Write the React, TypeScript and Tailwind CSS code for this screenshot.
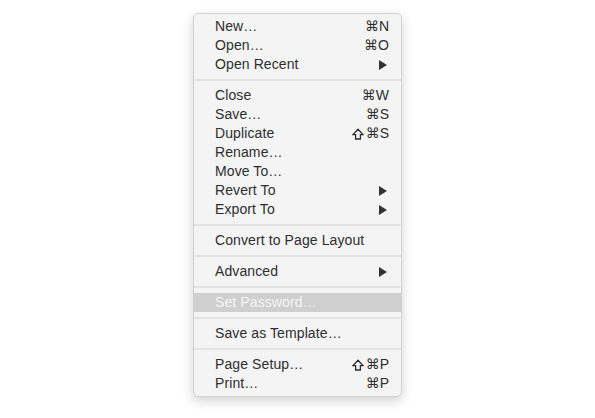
import React from "react";

type Item = { label: string; shortcut?: string; arrow?: boolean; highlighted?: boolean };

const groups: Item[][] = [
  [
    { label: "New…", shortcut: "⌘N" },
    { label: "Open…", shortcut: "⌘O" },
    { label: "Open Recent", arrow: true },
  ],
  [
    { label: "Close", shortcut: "⌘W" },
    { label: "Save…", shortcut: "⌘S" },
    { label: "Duplicate", shortcut: "⇧⌘S" },
    { label: "Rename…" },
    { label: "Move To…" },
    { label: "Revert To", arrow: true },
    { label: "Export To", arrow: true },
  ],
  [{ label: "Convert to Page Layout" }],
  [{ label: "Advanced", arrow: true }],
  [{ label: "Set Password…", highlighted: true }],
  [{ label: "Save as Template…" }],
  [
    { label: "Page Setup…", shortcut: "⇧⌘P" },
    { label: "Print…", shortcut: "⌘P" },
  ],
];

function Arrow() {
  return (
    <svg width="8" height="10" viewBox="0 0 8 10" className="mr-[2px]">
      <path d="M0 0 L8 5 L0 10 Z" fill="#333333" />
    </svg>
  );
}

function ShiftIcon() {
  return (
    <svg width="12" height="12" viewBox="0 0 12 12" className="mr-[2px]">
      <path
        d="M6 1.2 L11 6.6 H8.4 V11 H3.6 V6.6 H1 Z"
        fill="none"
        stroke="#2e2e2e"
        strokeWidth="1.3"
        strokeLinejoin="miter"
      />
    </svg>
  );
}

function Shortcut({ text }: { text: string }) {
  const chars = Array.from(text);
  return (
    <span className="flex items-center">
      {chars.map((c, i) => (c === "⇧" ? <ShiftIcon key={i} /> : <span key={i}>{c}</span>))}
    </span>
  );
}

function Row({ item }: { item: Item }) {
  return (
    <div
      className={`flex h-[19px] items-center justify-between pl-[21px] pr-[12px] ${
        item.highlighted ? "bg-[#cfcfcf] text-[#f6f6f6]" : "text-[#2e2e2e]"
      }`}
    >
      <span className="tracking-[0.1px]">{item.label}</span>
      {item.shortcut && <Shortcut text={item.shortcut} />}
      {item.arrow && <Arrow />}
    </div>
  );
}

export default function App() {
  return (
    <div className="h-[418px] w-[595px] bg-white font-['Liberation_Sans','DejaVu_Sans',sans-serif] text-[14px] leading-[19px]">
      <div className="flex pl-[193px] pt-[13px]">
        <div className="w-[209px] rounded-[5px] border border-[#d2d2d2] bg-[#f4f4f4] pb-[3px] pt-[3px] shadow-[0_4px_12px_rgba(0,0,0,0.18)]">
          {groups.map((g, gi) => (
            <div key={gi}>
              {gi > 0 && (
                <div className="flex h-[12px] items-center">
                  <div className="h-[2px] w-full bg-[#e3e3e3]" />
                </div>
              )}
              {g.map((it) => (
                <Row key={it.label} item={it} />
              ))}
            </div>
          ))}
        </div>
      </div>
    </div>
  );
}
